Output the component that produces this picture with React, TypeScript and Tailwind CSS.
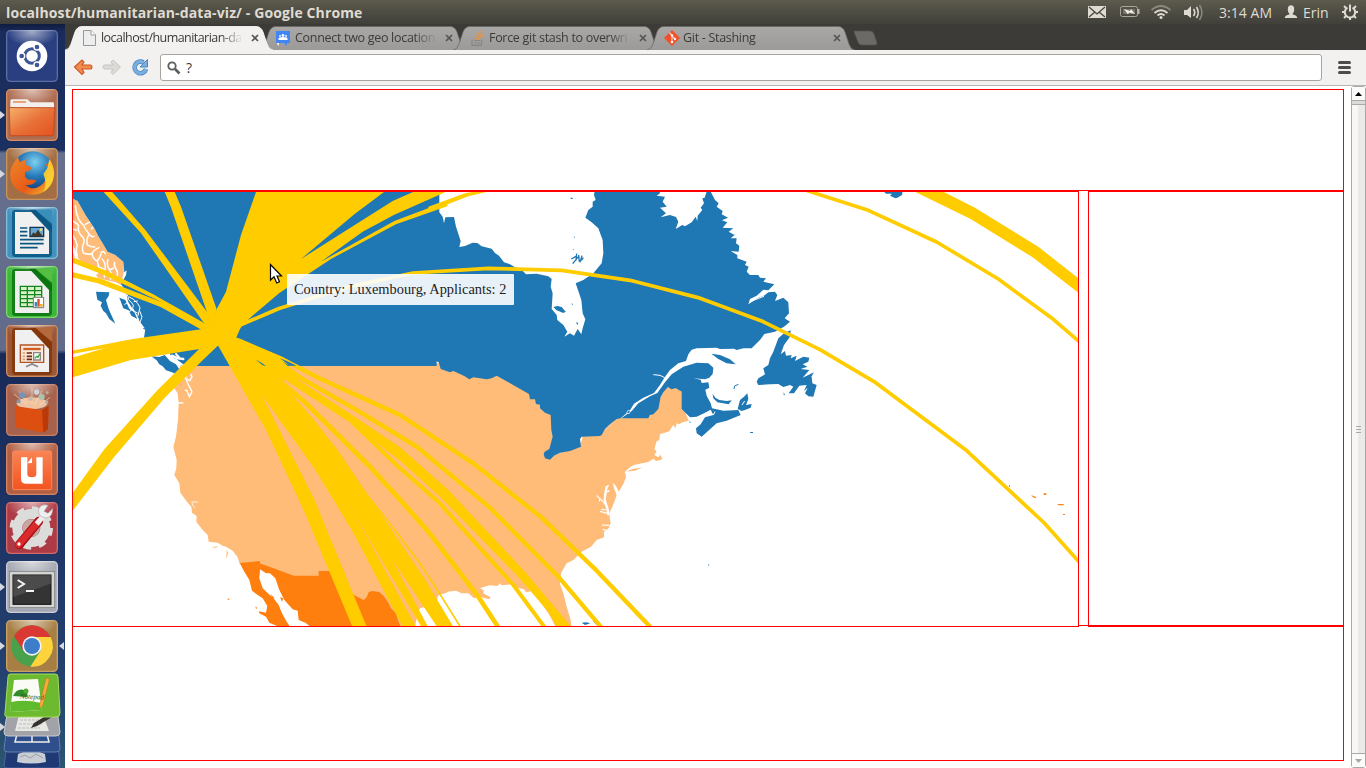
import React from "react";

const YELLOW = "#ffcc00";
const BLUE = "#1f77b4";
const PEACH = "#ffbb78";
const ORANGE = "#ff7f0e";

/* Map sections are digitised at three units per pixel, each from its own origin. */
const NW = "translate(66 185) scale(0.33333)";
const NE = "translate(430 185) scale(0.33333)";
const SW = "translate(66 360) scale(0.33333)";
const SE = "translate(400 380) scale(0.33333)";
const FE = "translate(800 185) scale(0.33333)";

function UnitedStates() {
  return (
    <g fill={PEACH}>
      <g transform={NW}>
        <path d="M18,38 L35,48 L45,66 L60,92 L72,112 L85,130 L98,155 L110,175 L125,200 L148,210 L172,230 L174,258 L165,300 L150,292 L120,285 L95,278 L84,258 L60,240 L18,212 Z" />
        <g fill="none" stroke="#fff" strokeWidth="4.500" strokeLinejoin="round" strokeLinecap="round">
          <path d="M28,62 Q30,84 37,100 Q42,112 52,120 Q58,134 68,145 Q76,158 84,154 M68,150 Q60,166 64,180 Q74,186 86,186" />
          <path d="M20,108 Q32,114 38,122 Q34,138 44,150 Q56,158 54,172 Q46,188 52,204 Q66,210 78,206 Q84,194 98,188" />
          <path d="M20,150 Q30,166 34,182 Q28,194 34,212 M58,118 L74,110 M76,132 L82,126 M20,132 L32,136" />
          <path d="M78,206 Q80,222 94,228 Q104,216 106,202 Q112,196 118,206 M94,228 L98,246 L112,252 M108,222 Q118,230 118,250 Q112,262 116,276" />
          <path d="M126,224 Q120,238 130,254 Q140,268 134,282 M146,232 Q142,242 150,252 Q158,264 152,276 M130,254 L142,250" />
          <path d="M18,184 L34,224 L60,244 L92,264" strokeWidth="9" />
        </g>
      </g>
      <g transform={SW}>
        <path d="M345,10 L325,85 L335,100 L338,130 L336,180 L330,230 L322,260 L332,300 L331,325 L325,345 L340,370 L343,398 L365,428 L376,440 L378,458 L392,468 L391,485 L410,510 L425,525 L428,545 L455,548 L470,557 L480,560 L500,572 L515,592 L521,612 L582,610 L683,655 L758,655 L860,720 L895,725 L940,700 L960,720 L1000,800 L1040,800 L1047,768 L1058,770 L1060,745 L1085,738 L1113,708 L1145,697 L1145,10 Z" />
        <path d="M435,562 L456,559 L450,563 Z M453,584 L457,588 Z M482,568 L486,580 L481,598 Z" />
        <g fill="none" stroke="#fff" strokeWidth="4">
          <path d="M348,18 L362,40 L358,55 L372,62 L378,50 L374,42 M360,58 L370,80 L378,95 L370,110 L362,90 L356,92" />
          <path d="M330,128 L352,129" />
          <path d="M376,426 L396,426 M378,428 L380,436 L388,443" strokeWidth="2.500" />
        </g>
      </g>
      <g transform={SE}>
        <path d="M-10,-40 L290,-17 L387,30 L460,103 L470,170 L450,232 L543,190 L550,160 L603,160 L650,115 L745,112 L772,85 L783,48 L790,35 L805,20 L815,27 L832,24 L846,38 L847,90 L856,98 L866,122 L850,126 L836,133 L830,130 L826,145 L820,134 L814,144 L808,154 L790,160 L780,162 L778,180 L770,184 L765,200 L763,208 L770,214 L763,225 L775,232 L781,224 L787,236 L782,240 L768,243 L760,236 L745,246 L715,252 L700,256 L690,262 L675,275 L678,292 L670,312 L656,335 L648,318 L638,308 L642,325 L650,345 L645,360 L637,380 L628,400 L630,418 L632,430 L626,445 L612,456 L612,472 L590,480 L573,500 L545,515 L520,540 L500,550 L483,580 L480,612 L490,640 L500,680 L512,720 L515,745 L470,745 L464,735 L455,718 L445,700 L420,665 L400,632 L378,637 L372,628 L355,624 L340,612 L305,616 L300,610 L292,618 L270,616 L240,624 L252,632 L250,640 L272,652 L268,658 L240,650 L222,655 L205,640 L185,640 L168,632 L140,635 L115,645 L110,662 L80,682 L65,682 L55,690 L45,740 L-10,740 Z M675,275 L700,266 L727,263 L705,272 Z" />
        <g fill="none" stroke="#fff" strokeLinejoin="round">
          <path d="M626,406 L622,385 L614,360 L617,335 L620,320" strokeWidth="7" />
          <path d="M618,322 L626,316 M618,336 L628,332" strokeWidth="5" />
          <path d="M620,378 L606,362 L590,347 M600,356 L598,364 M622,400 L600,394 M620,390 L604,388 M628,436 L606,435 M622,452 L608,448" strokeWidth="3.500" />
          <path d="M674,278 L700,261 L728,260" strokeWidth="3" />
        </g>
      </g>
    </g>
  );
}

function Mexico() {
  return (
    <g fill={ORANGE}>
      <g transform={SW}>
        <path d="M521,609 L582,603 L582,610 L683,647 L758,647 L758,633 L794,633 L865,706 L893,720 L902,712 L908,697 L918,693 L940,696 L955,710 L968,730 L975,745 L990,760 L995,778 L1004,800 L733,800 L718,788 L698,780 L695,752 L680,748 L655,720 L640,690 L628,655 L612,640 L600,640 L582,628 L580,655 L590,685 L608,702 L625,718 L638,735 L648,760 L662,785 L672,800 L638,800 L610,788 L600,770 L580,760 L578,754 L600,758 L604,738 L590,715 L575,705 L558,692 L550,660 L535,635Z" />
        <path d="M613,702 L626,714 L620,716 Z M642,712 L652,715 L648,725 Z M484,713 L491,719 L486,720 Z M568,739 L574,744 L570,747 Z" />
      </g>
      <g transform={FE}>
        <path d="M627,900 h3 v6 h-3 Z M693,931 l6,1 l10,4 l-2,4 l-8,-4 Z M731,925 h8 v5 h-8 Z M771,957 h20 v4 h-14 Z M789,987 h6 v3 h-6 Z" />
      </g>
    </g>
  );
}

function Canada() {
  return (
    <g fill={BLUE}>
      <g transform={NW}>
        <path d="M18,10 L18,40 L35,48 L45,66 L60,92 L85,130 L98,155 L110,175 L125,200 L148,210 L172,230 L175,262 L182,256 L180,270 L172,285 L165,297 L180,320 L186,350 L200,372 L215,390 L220,408 L238,432 L234,458 L246,466 L280,492 L298,500 L320,515 L332,530 L340,540 L345,543 L1112,543 L1112,528 L1118,530 L1118,10 Z" />
        <path d="M90,320 L130,322 L128,333 L120,345 L128,372 L148,416 L130,402 L120,385 L112,378 L104,362 L108,352 L94,344 Z" />
        <path d="M256,514 L280,516 L296,510 L312,528 L330,538 L342,556 L328,566 L318,562 L300,556 L290,544 L280,538 L272,526 Z" />
        <path d="M160,338 L178,345 L190,372 L205,382 L214,402 L196,392 L188,376 L172,370 Z" />
        <g fill="none" stroke={BLUE} strokeWidth="3.500" strokeLinejoin="round">
          <path d="M228,410 L238,385 L254,378 M232,418 L246,406 L260,407 M218,398 L208,372 L216,362 L228,366 M232,430 L242,434" />
        </g>
        <g fill="none" stroke="#fff" strokeWidth="3" strokeLinejoin="round" strokeLinecap="round">
          <path d="M170,316 Q182,322 186,334 Q184,345 196,352 Q206,360 200,370 Q202,380 214,384 M190,336 L204,344 Q216,354 222,368 L216,392" />
          <path d="M186,352 L176,358 M200,372 L188,382 M204,350 L214,348 M222,380 L228,396 L222,412 M176,330 L170,338" />
          <path d="M306,502 L314,518 L330,525 L342,540 M330,507 L340,518" strokeWidth="6" />
          <path d="M318,512 L336,520 L352,522 M330,526 L352,542" strokeWidth="7" />
        </g>
      </g>
      <g transform={NE}>
        <path d="M-30,0 L28,0 L28,82 L38,95 L42,115 L46,97 L72,96 L78,125 L92,168 L88,186 L105,183 L128,173 L142,174 L155,184 L185,191 L195,204 L207,212 L222,232 L240,238 L255,247 L275,254 L288,268 L320,266 L355,274 L365,282 L362,305 L368,325 L365,372 L380,390 L382,405 L400,420 L412,440 L403,455 L420,445 L432,452 L443,432 L454,448 L458,430 L466,403 L458,385 L454,345 L445,318 L437,295 L460,285 L490,265 L515,235 L520,205 L518,165 L505,130 L485,112 L466,98 L475,75 L488,65 L488,50 L497,45 L492,30 L497,0 L685,0 L690,25 L680,32 L705,35 L698,50 L710,65 L690,68 L708,85 L692,97 L720,90 L738,96 L745,110 L737,132 L757,120 L765,124 L785,112 L797,95 L802,108 L803,92 L817,75 L812,68 L822,55 L817,40 L824,38 L830,20 L842,20 L855,45 L866,55 L860,65 L878,78 L875,88 L894,98 L876,106 L892,112 L878,128 L910,130 L896,140 L914,150 L902,160 L920,160 L918,175 L928,182 L926,200 L902,198 L922,210 L922,220 L950,230 L945,240 L956,245 L950,260 L960,270 L985,270 L990,278 L1008,280 L1000,290 L1033,298 L1015,316 L1000,314 L980,332 L960,342 L955,358 L985,338 L1002,332 L1015,322 L1035,320 L1042,330 L1035,348 L1060,338 L1075,352 L1077,385 L1064,400 L1080,410 L1062,425 L1035,440 L1003,447 L990,465 L965,490 L940,490 L920,495 L912,491 L870,492 L860,488 L800,490 L785,494 L775,508 L768,528 L745,535 L720,555 L703,578 L690,600 L672,624 L640,638 L612,656 L600,676 L572,700 L560,702 L540,718 L525,732 L515,750 L510,753 L455,755 L450,762 L453,785 L420,798 L390,803 L372,812 L360,824 L345,820 L341,808 L344,800 L358,792 L368,755 L364,735 L362,690 L345,683 L330,670 L330,659 L318,657 L315,643 L300,643 L297,627 L235,592 L200,572 L185,580 L170,583 L150,580 L130,577 L118,583 L104,574 L90,567 L70,558 L60,562 L32,552 L26,532 L18,528 L18,543 L-30,543 Z" />
        <path d="M574,700 L606,677 L625,655 L660,634 L682,624 L705,592 L725,568 L760,545 L800,533 L835,535 L850,548 L848,567 L838,578 L825,583 L790,580 L812,584 L815,594 L835,592 L838,608 L826,614 L830,632 L842,655 L846,670 L880,677 L925,675 L932,690 L890,707 L860,715 L845,728 L830,742 L815,755 L800,745 L798,730 L812,718 L825,697 L850,690 L842,674 L825,683 L800,695 L780,697 L763,680 L755,672 L755,620 L738,610 L724,613 L714,606 L700,622 L692,636 L685,672 L670,688 L660,690 L655,700 Z" />
        <path d="M923,672 L930,645 L942,635 L952,625 L955,642 L948,660 L965,657 L962,668 L945,675 L935,678 Z M848,626 L856,638 L868,645 L890,648 L905,646 L896,658 L880,655 L862,652 L850,640 Z M844,506 L870,510 L900,523 L917,538 L890,535 L865,522 Z" />
        <path d="M1062,445 L1082,436 L1080,455 L1062,480 L1052,508 L1065,498 L1068,512 L1085,510 L1082,520 L1100,512 L1095,528 L1120,515 L1138,518 L1135,530 L1118,538 L1132,545 L1112,552 L1138,555 L1118,578 L1152,562 L1140,582 L1122,600 L1145,575 L1147,595 L1160,600 L1150,635 L1135,634 L1125,625 L1133,608 L1122,618 L1130,600 L1108,602 L1092,625 L1076,625 L1090,605 L1080,600 L1060,606 L1045,597 L1020,598 L985,600 L980,590 L985,580 L1005,568 L1000,550 L1015,540 L1020,520 L1030,500 L1045,460 Z" />
        <path d="M370,366 L382,363 L395,366 L407,380 L400,384 L380,376 Z M438,412 l7,2 l-3,6 Z M421,38 h7 v4 h-5 Z M431,155 h4 v4 Z M424,356 h5 v4 Z M428,193 h4 v3 Z M960,741 h9 v3 h-8 Z M1061,622 l4,8 h-4 Z" />
        <path d="M424,222 L438,214 M428,236 L446,214 M440,206 L438,226 M446,210 L448,230 M456,212 L450,232 M460,218 L454,226" fill="none" stroke={BLUE} strokeWidth="4" />
        <path d="M912,612 L914,603 L925,598" fill="none" stroke={BLUE} strokeWidth="3" />
        <path d="M670,569 L690,571 L704,578 M965,348 L1002,334" fill="none" stroke="#fff" strokeWidth="3" />
        <path d="M590,684 L594,676 L601,678 L598,686 Z" stroke="#fff" strokeWidth="2" />
        <path d="M936,660 L944,648 M855,680 L850,690" stroke="#fff" strokeWidth="3" />
      </g>
      <g transform={FE}>
        <path d="M250,18 L308,18 L306,30 L292,38 L286,40 L270,32 L276,26 L258,26 Z" />
      </g>
      <g transform={SE}>
        <path d="M545,728 l14,-1 l12,3 l-16,5 Z M578,722 l8,3 l6,12 l-8,-8 Z M924,553 l5,2 l-4,2 Z M868,124 l5,3 l-4,2 Z" />
      </g>
    </g>
  );
}

function MigrationArcs() {
  return (
    <g fill={YELLOW}>
      <g transform={NW}>
        <path d="M110,18 L136,18 L238,135 L425,383 L445,440 L412,412 L225,144 Z" />
        <path d="M295,18 L325,18 L345,65 L452,373 L440,430 L424,385 L315,67 Z" />
        <path d="M571,18 L958,18 L865,88 L705,222 L980,48 L1048,18 L1142,18 L1134,23 L985,89 L890,140 L765,230 L985,108 L1144,48 L1144,64 L990,118 L795,222 L640,324 L535,413 L522,432 L510,460 L480,490 L430,440 L452,373 L480,320 L525,150 Z" />
        <path d="M18,216 L130,262 L265,330 L405,430 L470,460 L405,433 L285,366 L95,295 L18,277 L18,261 L110,283 L292,353 L115,270 L18,232 Z" />
        <path d="M18,216 L130,262 L265,330 L425,420 L470,460 L405,433 L285,366 L220,338 L292,353 L115,270 L18,232 Z" />
        <path d="M18,497 L200,462 L405,433 L470,420 L458,482 L400,492 L195,525 L18,578 L18,518 L115,490 L18,507 Z" />
      </g>
      <g transform={NE}>
        <path d="M-5,14 L44,18 L-5,42 Z M-5,65 L105,25 L150,16 L182,18 L115,34 L-5,80 Z" />
      </g>
      <g transform={SW}>
        <path d="M400,-34 L457,-44 L410,1 L295,115 L145,290 L18,455 L18,402 L115,268 L272,93 Z" />
        <path d="M430,-95 L515,-66 L600,18 L650,72 L740,175 L815,270 L890,382 L1072,650 L1162,800 L1113,800 L870,435 L795,318 L960,565 L1086,800 L1066,800 L905,530 L845,425 L935,590 L1050,800 L1010,800 L860,515 L745,325 L587,105 L745,418 L902,800 L859,800 L715,455 L600,210 L457,-42 Z" />
        <path d="M505,-60 L585,10 L700,62 L850,160 L1002,262 L1147,390 L1377,635 L1515,800 L1472,800 L1447,755 L1352,645 L1122,410 L1002,302 L860,193 L700,88 L590,15 Z" />
        <path d="M512,-66 L650,-8 L635,-8 L665,17 L720,58 L650,60 L500,-40 Z" />
      </g>
      <g fill="none" stroke={YELLOW} strokeLinejoin="round">
        <g transform={SW} strokeWidth="13">
          <path d="M525,-50 L600,28 L715,125 L910,318 L1002,419 L1087,515 L1237,710 L1297,802" strokeWidth="14" />
          <path d="M860,188 L1002,325 L1117,425 L1342,675 L1436,802" strokeWidth="12" />
          <path d="M515,-56 L680,40 L880,155 L1052,260 L1272,443 L1477,650 L1606,802" />
          <path d="M515,-60 L650,-2 L750,50 L1002,165 L1222,310 L1427,473 L1592,632 L1754,802" />
          <path d="M880,375 L1002,530 L1072,625 L1130,715 L1184,802" strokeWidth="5" />
        </g>
        <path
          d="M241.500,324.500 L279,308.500 L348,287 L413,273 L488.300,268.300 L561.600,270.300 L630,280.300 L698,297.600 L763,321.600 L820,349.600 L874,381.600 L966.600,450.600 L1044.300,523 L1080,563"
          strokeWidth="3.700"
        />
        <g transform={FE} strokeWidth="11">
          <path d="M18,16 L205,76 L410,171 L595,282 L760,403 L840,472" />
        </g>
      </g>
      <g transform={FE}>
        <path d="M336,16 L422,16 L525,68 L717,187 L840,284 L840,327 L700,218 L512,102 Z" />
      </g>
      <g transform={SW}>
        <path d="M570,-1 L584,7 L600,18 L590,16 Z M642,-5 L662,3 L692,17 L672,17 Z" fill={BLUE} />
      </g>
    </g>
  );
}

function WorldMap() {
  return (
    <svg className="block h-[434px] w-[1005px]" viewBox="73 192 1005 434">
      <rect x="73" y="192" width="1005" height="434" fill="#fff" />
      <UnitedStates />
      <Mexico />
      <Canada />
      <MigrationArcs />
    </svg>
  );
}

/* ---------- launcher ---------- */

function Tile({ color, edge, running, focused, children }: { color: string; edge: string; running?: boolean; focused?: boolean; children: React.ReactNode }) {
  return (
    <div className="relative ml-[6px] size-[52px] shrink-0">
      <svg viewBox="0 0 156 156" className="size-[52px]">
        <rect x="2" y="2" width="152" height="152" rx="12" fill={color} stroke={edge} strokeWidth="4" />
        <ellipse cx="78" cy="6" rx="76" ry="44" fill="url(#gloss)" />
        {children}
      </svg>
      {running && <svg viewBox="0 0 5 8" className="absolute top-[22px] left-[-6px] h-[8px] w-[5px]"><path d="M0 0L5 4L0 8Z" fill="#d5d8df" /></svg>}
      {focused && <svg viewBox="0 0 5 8" className="absolute top-[22px] left-[53px] h-[8px] w-[5px]"><path d="M5 0L0 4L5 8Z" fill="#d5d8df" /></svg>}
    </div>
  );
}

function OfficeSheet({ dark, mid, children }: { dark: string; mid: string; children: React.ReactNode }) {
  return (
    <>
      <path d="M18 18Q18 8 28 8H128Q138 8 138 18V138Q138 150 128 150H28Q18 150 18 138Z" fill={dark} opacity="0.85" />
      <path d="M88 8H138V50Z" fill={mid} />
      <path d="M70 8H88L138 58V76Z" fill={dark} />
      <path d="M27 15H76L129 72V141H27Z" fill="#f0f0f0" />
      {children}
    </>
  );
}

function Launcher() {
  return (
    <div className="relative flex h-[744px] w-[65px] shrink-0 flex-col gap-[7px] overflow-hidden bg-[linear-gradient(to_bottom,#101c40_0px,#1a2c5b_8px,#1b3060_126px,#66708e_129px,#626c8a_326px,#182a58_330px,#1e3566_520px,#24406f_640px,#2b5570_744px)] pt-[6px]">
      <Tile color="#293f80" edge="#5a6ea4">
        <circle cx="78" cy="78" r="46" fill="#fff" />
        <circle cx="78" cy="78" r="22" fill="none" stroke="#3e5596" strokeWidth="9" />
        <g fill="#3e5596" stroke="#fff" strokeWidth="4">
          <circle cx="47" cy="78" r="9" /><circle cx="93" cy="51" r="9" /><circle cx="93" cy="105" r="9" />
        </g>
      </Tile>
      <Tile color="#ae6b50" edge="#d58d62" running>
        <path d="M13 54V35Q13 31 18 31H64L74 40H140Q144 40 144 44V56Z" fill="#f3efec" />
        <path d="M21 39H60" stroke="#e99264" strokeWidth="5" />
        <path d="M10 56H146L143 134Q142 140 136 140H20Q13 140 12 134Z" fill="url(#folder)" stroke="#bd3e12" strokeWidth="2" />
      </Tile>
      <Tile color="#a36e43" edge="#c9935c" running>
        <circle cx="80" cy="74" r="64" fill="url(#globe)" />
        <path d="M130 30C152 62 148 112 112 132C84 148 42 140 22 112C8 92 10 62 26 40L36 26L40 42Q52 38 62 34L58 50Q76 54 78 62Q66 70 58 72Q52 88 68 95Q84 94 92 98Q78 114 58 110Q84 134 112 106Q124 92 118 70L128 76Q128 60 118 48Q132 50 130 30Z" fill="url(#fox)" />
        <path d="M112 132C148 112 154 66 130 34L124 60L112 78L116 90Q122 112 112 132Z" fill="#ffd933" opacity="0.85" />
      </Tile>
      <Tile color="#4391bd" edge="#80bdd8">
        <OfficeSheet dark="#0b5682" mid="#388fba">
          <path d="M42 63H64M42 74H64M42 86H64M42 98H113M42 110H113M42 122H95" stroke="#0b5682" strokeWidth="5" />
          <path d="M72 61H113V89H72Z" fill="#69a6d3" stroke="#0b3756" strokeWidth="4" />
          <path d="M74 88L82 76L88 80L96 68L104 80L112 88Z" fill="#403828" />
          <circle cx="105" cy="68" r="4" fill="#eddc67" />
        </OfficeSheet>
      </Tile>
      <Tile color="#3eb63b" edge="#7cd865">
        <OfficeSheet dark="#0b7410" mid="#55bf42">
          <path d="M43 61H107V122H43Z" fill="#d6f3cc" stroke="#16851b" strokeWidth="4" />
          <path d="M43 74H107M43 86H107M43 98H107M43 110H107M64 61V122M86 61V122" stroke="#16851b" strokeWidth="4" />
          <path d="M82 94H113V125H82Z" fill="#fff" stroke="#777" strokeWidth="3" />
          <path d="M86 108h7v14h-7z" fill="#4283bc" /><path d="M94 99h7v23h-7z" fill="#d65023" /><path d="M102 114h8v8h-8z" fill="#edb228" />
        </OfficeSheet>
      </Tile>
      <Tile color="#9b5736" edge="#cc8a5c">
        <OfficeSheet dark="#843609" mid="#b46a3c">
          <path d="M43 60H113V112H43Z" fill="#f9e9da" stroke="#b65323" strokeWidth="4" />
          <path d="M52 72H104" stroke="#cf5e23" strokeWidth="7" />
          <path d="M50 84H57M50 94H57M50 103H57" stroke="#da9a72" strokeWidth="5" />
          <path d="M62 84H78M62 94H78M62 103H78" stroke="#6e2b0d" strokeWidth="5" />
          <path d="M83 83H103V105H83Z" fill="#fff" stroke="#888" strokeWidth="4" /><path d="M87 100L92 94L96 97L101 87" fill="none" stroke="#32a336" strokeWidth="4" />
          <path d="M78 112V120M60 125L78 117L96 125" fill="none" stroke="#888" strokeWidth="5" />
        </OfficeSheet>
      </Tile>
      <Tile color="#a6624c" edge="#c98062">
        <ellipse cx="78" cy="58" rx="46" ry="18" fill="#ffd9b8" opacity="0.8" />
        <path d="M24 30L60 60M40 22L66 60M78 12V60M108 20L88 60M132 40L100 64" stroke="#ffe7cc" strokeWidth="2.500" opacity="0.7" />
        <circle cx="48" cy="34" r="9" fill="#7096c0" /><circle cx="92" cy="24" r="8" fill="#cfd3da" /><circle cx="107" cy="39" r="9" fill="#aac3b0" /><circle cx="74" cy="44" r="7" fill="#cbb8ac" /><circle cx="38" cy="52" r="6" fill="#8198ae" /><circle cx="124" cy="26" r="4" fill="#bcb0a8" /><circle cx="122" cy="54" r="5" fill="#b8aaa4" />
        <path d="M26 66L108 78L128 66L126 136L112 146L28 130Z" fill="#dd4f10" />
        <path d="M108 78L128 66L126 136L112 146Z" fill="#b93a08" />
        <path d="M64 70V55Q64 52 68 52H80Q85 52 85 57V72" fill="none" stroke="#f9c590" strokeWidth="4" />
      </Tile>
      <Tile color="#b25f42" edge="#d58362">
        <rect x="20" y="24" width="117" height="116" rx="5" fill="url(#orangeBox)" stroke="#f88961" strokeWidth="3" />
        <path d="M45 43H64V94Q64 103 78 103Q91 103 91 94V43H110V122H58Q45 122 45 106Z" fill="#fff" />
        <path d="M64 61L78 43V60Z" fill="#fff" />
      </Tile>
      <Tile color="#ad3b45" edge="#d06a6c">
        <g transform="translate(76 78)">
          <circle r="42" fill="none" stroke="#dcdcda" strokeWidth="30" />
          <circle r="57" fill="none" stroke="#dcdcda" strokeWidth="16" strokeDasharray="22 22.760" />
          <circle r="26" fill="#c9a7a4" />
        </g>
        <path d="M98 58L40 128" stroke="#a60f16" strokeWidth="27" strokeLinecap="round" />
        <path d="M98 58L38 128" stroke="#da2a2c" strokeWidth="20" strokeLinecap="round" />
        <path d="M92 66L116 38" stroke="#eee" strokeWidth="15" />
        <path d="M126 10Q104 4 97 24Q98 48 122 48Q140 44 140 20L126 34L114 28Z" fill="#efefef" stroke="#aaa" strokeWidth="2" />
        <circle cx="39" cy="126" r="5" fill="#fff" />
      </Tile>
      <Tile color="#a5a8b2" edge="#cbcdd4" running>
        <rect x="10" y="32" width="136" height="108" fill="#d4d4d2" stroke="#777" strokeWidth="2" />
        <rect x="21" y="42" width="114" height="88" fill="#333433" stroke="#111" strokeWidth="3" />
        <path d="M22 43H134V68L22 108Z" fill="#4a4b4a" />
        <path d="M35 57L54 69L35 81M60 90H84" fill="none" stroke="#f4f4f4" strokeWidth="6" />
      </Tile>
      <Tile color="#a77f45" edge="#c9a263" running focused>
        <circle cx="78" cy="78" r="62" fill="#49a14b" />
        <path d="M24 48A62 62 0 0 1 134 51H78L52 92Z" fill="#da3832" />
        <path d="M134 51A62 62 0 0 1 73 140L104 92L90 51Z" fill="#ffd33b" />
        <circle cx="78" cy="78" r="29" fill="#f4f4f4" /><circle cx="78" cy="78" r="24" fill="#3e7dc8" />
      </Tile>
      <div className="relative mt-[-6px] h-[96px] w-[65px] shrink-0">
        <svg viewBox="0 673 65 96" className="h-[96px] w-[65px]">
          <path d="M7 744H58L60 766Q60 768 56 768H8Q4 768 4 766Z" fill="#1f3975" stroke="#4d66a0" />
          <path d="M18 754Q31 747 45 754L46 762Q31 765 17 762Z" fill="#c9ced5" />
          <path d="M20 757L25 755L30 758L36 754L43 758" fill="none" stroke="#98a0aa" />
          <path d="M7 727H58L60 749Q60 752 56 752H8Q4 752 4 749Z" fill="#2e4e8c" stroke="#667eae" />
          <path d="M17 734H47L49 742H15ZM32 734V742" fill="none" stroke="#eee" strokeWidth="1.500" />
          <path d="M8 709H57L60 732Q60 736 56 736H8Q4 736 4 732Z" fill="#a2a3a8" stroke="#c9cad0" />
          <path d="M19 715H43L49 731H15Z" fill="#e8e8e5" />
          <path d="M20 720H42M19 724H43M18 728H40" stroke="#bbb" strokeDasharray="3 1" />
          <path d="M49 714L34 723L31 728L37 726L52 717Z" fill="#35312c" />
          <path d="M10 674H55Q58 674 58 677L60 713Q60 717 56 717H8Q4 717 5 713L8 677Q8 674 10 674Z" fill="#6db92f" stroke="#a5dc62" />
          <path d="M14 680L38 679L42 710L10 712Z" fill="#fafbf7" />
          <path d="M11 702Q26 699 41 703L42 710L10 712Z" fill="#60ba2d" />
          <path d="M13 696Q17 688 24 690Q29 692 27 697Z" fill="#318d2a" /><circle cx="26" cy="691" r="2.500" fill="#50ad34" />
          <path d="M46 678L49.500 679L43 705L39 709L40 703Z" fill="#f6ac38" stroke="#b87028" strokeWidth=".5" />
          <path d="M0 723L5 727L0 731Z" fill="#d5d8df" />
        </svg>
        <span className="absolute top-[21px] left-[20px] rotate-[3deg] font-['Liberation_Serif',serif] text-[7px] leading-none text-[#265921] italic">Notepad</span>
      </div>
      <svg className="absolute size-0">
        <defs>
          <radialGradient id="gloss"><stop offset="0" stopColor="#fff" stopOpacity="0.55" /><stop offset="1" stopColor="#fff" stopOpacity="0" /></radialGradient>
          <linearGradient id="folder" x1="0" y1="0" x2="1" y2="1"><stop offset="0" stopColor="#f6b069" /><stop offset=".5" stopColor="#e8713a" /><stop offset="1" stopColor="#e5521c" /></linearGradient>
          <radialGradient id="globe" cx=".55" cy=".25" r=".7"><stop offset="0" stopColor="#7dd0ee" /><stop offset=".5" stopColor="#2578b8" /><stop offset="1" stopColor="#113a74" /></radialGradient>
          <linearGradient id="fox" x1="0" y1="0" x2="1" y2="1"><stop offset="0" stopColor="#f08629" /><stop offset=".6" stopColor="#e65b17" /><stop offset="1" stopColor="#fbc331" /></linearGradient>
          <linearGradient id="orangeBox" x1="0" y1="0" x2="0" y2="1"><stop offset="0" stopColor="#f98454" /><stop offset="1" stopColor="#f35420" /></linearGradient>
        </defs>
      </svg>
    </div>
  );
}

/* ---------- window chrome ---------- */

function TopBar() {
  return (
    <div className="flex h-[24px] shrink-0 items-center bg-[linear-gradient(#5d5b4d,#403f3a)] pl-[6px] text-[#dfdbd2]">
      <span className="text-[14px] font-bold tracking-[0.120px] whitespace-nowrap">localhost/humanitarian-data-viz/ - Google Chrome</span>
      <svg viewBox="1080 0 130 24" className="ml-auto h-[24px] w-[130px]">
        <rect x="1088" y="6" width="18" height="12" fill="#dfdbd2" />
        <path d="M1089 7L1097 14L1105 7M1089 17L1095 12M1105 17L1099 12" fill="none" stroke="#45443e" strokeWidth="1.300" />
        <rect x="1120.500" y="6.500" width="17" height="10" rx="2" fill="none" stroke="#aaa69c" />
        <path d="M1138.500 9V14" stroke="#bbb7ad" strokeWidth="2" />
        <path d="M1123 9H1135V14H1123Z" fill="#77746a" />
        <path d="M1124 9L1130 11L1131 9L1135 14L1129 12.500L1128 14.500Z" fill="#f2eee5" />
        <g fill="none" strokeWidth="1.900">
          <path d="M1151.500 10Q1161 2 1170.500 10" stroke="#8b887e" />
          <path d="M1154.500 13Q1161 7.500 1167.500 13" stroke="#dfdbd2" />
          <path d="M1157.500 15.500Q1161 12.500 1164.500 15.500" stroke="#dfdbd2" />
        </g>
        <circle cx="1161" cy="17.500" r="1.500" fill="#dfdbd2" />
        <path d="M1184 10H1187L1191 6V18L1187 15H1184Z" fill="#dfdbd2" />
        <path d="M1193.500 9Q1196 12.500 1193.500 16M1196.500 7Q1200 12.500 1196.500 18" fill="none" stroke="#dfdbd2" strokeWidth="1.600" />
        <path d="M1199.500 5Q1204.500 12.500 1199.500 20" fill="none" stroke="#8b887e" strokeWidth="1.600" />
      </svg>
      <span className="ml-[9px] w-[55px] text-[14px] tracking-[0.050px] whitespace-nowrap">3:14 AM</span>
      <svg viewBox="0 0 14 14" className="ml-[10px] size-[14px]">
        <ellipse cx="7" cy="4.500" rx="3.200" ry="4.200" fill="#dfdbd2" /><path d="M5.300 7H8.700V9.500Q13 10 13.300 13H.7Q1 10 5.300 9.500Z" fill="#dfdbd2" />
      </svg>
      <span className="ml-[5px] w-[27px] text-[14px]">Erin</span>
      <svg viewBox="0 0 18 18" className="mr-[7px] ml-[11px] size-[18px]">
        <path d="M6.500 4.700A5.200 5.200 0 1 0 11.500 4.700" fill="none" stroke="#dfdbd2" strokeWidth="2" />
        <path d="M9 1.500V8.500M1 9H3.500M14.500 9H17M9 14.500V17M3 3L5 5M15 3L13 5M3 15L5 13M15 15L13 13" stroke="#dfdbd2" strokeWidth="2" />
      </svg>
    </div>
  );
}

function Tab({ title, active, children }: { title: string; active?: boolean; children: React.ReactNode }) {
  return (
    <div className={active ? "relative z-10 mr-[-11px] flex h-[24px] w-[205px] shrink-0 items-center pl-[17px]" : "relative mr-[-11px] flex h-[24px] w-[205px] shrink-0 items-center pl-[17px]"}>
      <svg viewBox="0 0 208 24" className="absolute top-0 left-0 h-[24px] w-[208px]">
        <defs><linearGradient id="tabShade" x1="0" y1="0" x2="0" y2="1"><stop offset="0" stopColor="#a9a8a6" /><stop offset="1" stopColor="#9b9a98" /></linearGradient></defs>
        <path d="M0 24Q4 24 6 18L10 6Q12 .5 17 .5H191Q196 .5 198 6L202 18Q204 24 208 24Z" fill={active ? "#f2f1f0" : "url(#tabShade)"} />
        <path d="M0 24Q4 24 6 18L10 6Q12 .5 17 .5H191Q196 .5 198 6L202 18Q204 24 208 24" fill="none" stroke={active ? "#fff" : "#6a6965"} strokeWidth=".8" />
      </svg>
      <svg viewBox="0 0 16 16" className="relative size-[16px] shrink-0">{children}</svg>
      <span
        className={
          active
            ? "relative ml-[3px] w-[143px] [mask-image:linear-gradient(to_right,#000_84%,transparent_99%)] text-[12.500px] tracking-[-0.550px] whitespace-nowrap text-[#3c3b37]"
            : "relative ml-[3px] w-[143px] [mask-image:linear-gradient(to_right,#000_84%,transparent_99%)] text-[12.500px] tracking-[-0.300px] whitespace-nowrap text-[#3c3b37]"
        }
      >
        {title}
      </span>
      <svg viewBox="0 0 8 8" className="relative ml-[7px] size-[8px] shrink-0"><path d="M1 1L7 7M7 1L1 7" stroke="#555450" strokeWidth="1.700" /></svg>
    </div>
  );
}

function TabStrip() {
  return (
    <div className="flex h-[26px] shrink-0 items-end bg-[#3c3b37]">
      <Tab title="localhost/humanitarian-da" active>
        <path d="M1.500 .5H9L13.500 5V15.500H1.500Z" fill="#ededed" stroke="#999" /><path d="M9 .5V5H13.500" fill="#fff" stroke="#999" />
      </Tab>
      <Tab title="Connect two geo location">
        <path d="M0 1H14V13H11V16L8 13H0Z" fill="#4285f4" /><path d="M1 14L3 16V13H1Z" fill="#eee" />
        <path d="M2.500 8.500Q4 6.500 5 7.500Q7 5.500 9 7.500Q10.500 6.500 11.500 8.500V10H2.500Z" fill="#fff" /><circle cx="7" cy="5.200" r="1.300" fill="#fff" /><circle cx="4" cy="6" r=".9" fill="#fff" /><circle cx="10" cy="6" r=".9" fill="#fff" />
      </Tab>
      <Tab title="Force git stash to overwri">
        <path d="M2 9.500V15.300H11.500V9.500M4 10.500H10M4 13H10" fill="none" stroke="#858585" strokeWidth="1.200" />
        <path d="M4.500 8.300L9.800 9.200M5.500 5.500L10.500 8M8 3L11.500 7M10.800 1L12.500 6" stroke="#ee9038" strokeWidth="1.300" />
      </Tab>
      <Tab title="Git - Stashing">
        <path d="M8 0L16 8L8 16L0 8Z" fill="#f34f29" /><path d="M5.500 2.500L8 5.500V12M8 6L11 9" fill="none" stroke="#f4cdbf" strokeWidth="1.200" /><circle cx="8" cy="12" r="1.300" fill="#fff" /><circle cx="11" cy="9" r="1.200" fill="#fff" /><circle cx="8" cy="5.500" r="1.200" fill="#fff" />
      </Tab>
      <svg viewBox="0 0 26 16" className="mb-[4px] ml-[11px] h-[16px] w-[26px]"><path d="M2 1H18Q21 1 22 4L25 13Q25 15 23 15H10Q7 15 6 12L2 2Z" fill="#6b6a66" stroke="#54534f" strokeWidth=".8" /></svg>
    </div>
  );
}

function Toolbar() {
  return (
    <div className="flex h-[36px] shrink-0 items-center border-b border-[#b9b5b0] bg-[#f2f1f0]">
      <svg viewBox="0 0 90 35" className="h-[35px] w-[90px]">
        <path d="M9.500 17L17 10L19 12L17 15H25.500Q27 15 27 17Q27 19 25.500 19H17L19 22.500L17 24.500Z" fill="#f28b4e" stroke="#cc5621" strokeWidth="1.100" />
        <path d="M55.500 17L48 10L46 12L48 15H39.500Q38 15 38 17Q38 19 39.500 19H48L46 22.500L48 24.500Z" fill="#dcdad7" stroke="#c8c5c1" strokeWidth="1" />
        <path d="M81 19A5.800 5.800 0 1 1 78.500 12.500" fill="none" stroke="#4a86c0" strokeWidth="4.600" />
        <path d="M81 19A5.800 5.800 0 1 1 78.500 12.500" fill="none" stroke="#78afdf" strokeWidth="3.200" />
        <path d="M82.500 9.500V17H75Z" fill="#79b0df" stroke="#4a86c0" />
      </svg>
      <div className="ml-[5px] flex h-[27px] w-[1162px] items-center rounded-[3px] border border-[#a9a49d] bg-white">
        <svg viewBox="0 0 14 14" className="ml-[6px] size-[14px]"><circle cx="5" cy="5" r="3.700" fill="none" stroke="#5d5d5d" strokeWidth="1.800" /><path d="M8 8L12.500 12.500" stroke="#5d5d5d" strokeWidth="2.600" /></svg>
        <span className="ml-[5px] text-[14px] text-[#3c3b37]">?</span>
      </div>
      <div className="ml-[16px] flex w-[13px] flex-col gap-[2px]">
        <div className="h-[3px] rounded-full bg-[#4c4c4c]" />
        <div className="h-[3px] rounded-full bg-[#4c4c4c]" />
        <div className="h-[3px] rounded-full bg-[#4c4c4c]" />
      </div>
    </div>
  );
}

function Scrollbar() {
  return (
    <div className="flex w-[15px] shrink-0 flex-col rounded-[3px] border border-[#aaa9a7] bg-[#f5f4f3]">
      <div className="flex h-[14px] items-center justify-center border-b border-[#aaa9a7] bg-[#fbfbfa]"><svg viewBox="0 0 7 4" className="h-[4px] w-[7px]"><path d="M0 4L3.500 0L7 4Z" fill="#000" /></svg></div>
      <div className="h-[4px] border-b border-[#aaa9a7] bg-[#dcdbda]" />
      <div className="flex flex-1 flex-col items-center justify-center gap-[2px] bg-[linear-gradient(to_right,#f8f7f6_50%,#ebeae9_50%)]">
        <div className="h-px w-[5px] bg-[#aaa9a7]" /><div className="h-px w-[5px] bg-[#aaa9a7]" /><div className="h-px w-[5px] bg-[#aaa9a7]" />
      </div>
      <div className="flex h-[14px] items-center justify-center border-t border-[#aaa9a7] bg-[#fbfbfa]"><svg viewBox="0 0 7 4" className="h-[4px] w-[7px]"><path d="M0 0L3.500 4L7 0Z" fill="#a8a7a5" /></svg></div>
    </div>
  );
}

function Page() {
  return (
    <div className="flex min-h-0 flex-1 bg-white">
      <div className="flex w-[1279px] shrink-0 flex-col pt-[3px] pl-[7px]">
        <div className="h-[102px] shrink-0 border border-[#ff0000]" />
        <div className="relative z-10 flex h-[436px] shrink-0 justify-between">
          <div className="relative w-[1007px] border border-[#ff0000] bg-white">
            <WorldMap />
            <div className="absolute top-[82px] left-[214px] flex h-[31px] w-[227px] items-center rounded-[1px] bg-white/90 pl-[7px] font-['Liberation_Serif',serif] text-[14.400px] whitespace-nowrap text-[#222]">
              Country: Luxembourg, Applicants: 2
            </div>
            <svg viewBox="0 0 14 22" className="absolute top-[71px] left-[196px] h-[22px] w-[14px]">
              <path d="M1.500 1.500V17L5 13.700L7.700 20L10.500 18.800L8 13H12.500Z" fill="#fff" stroke="#000" strokeWidth="1.200" />
            </svg>
          </div>
          <div className="h-[436px] w-[256px] border border-[#ff0000]" />
        </div>
        <div className="mt-[-2px] h-[136px] shrink-0 border border-[#ff0000]" />
      </div>
      <div className="ml-[7px] flex"><Scrollbar /></div>
    </div>
  );
}

export default function App() {
  return (
    <div className="flex h-[768px] w-[1366px] flex-col overflow-hidden font-['Open_Sans','Noto_Sans',sans-serif]">
      <TopBar />
      <div className="flex min-h-0 flex-1">
        <Launcher />
        <div className="flex min-w-0 flex-1 flex-col">
          <TabStrip />
          <Toolbar />
          <Page />
        </div>
      </div>
    </div>
  );
}
